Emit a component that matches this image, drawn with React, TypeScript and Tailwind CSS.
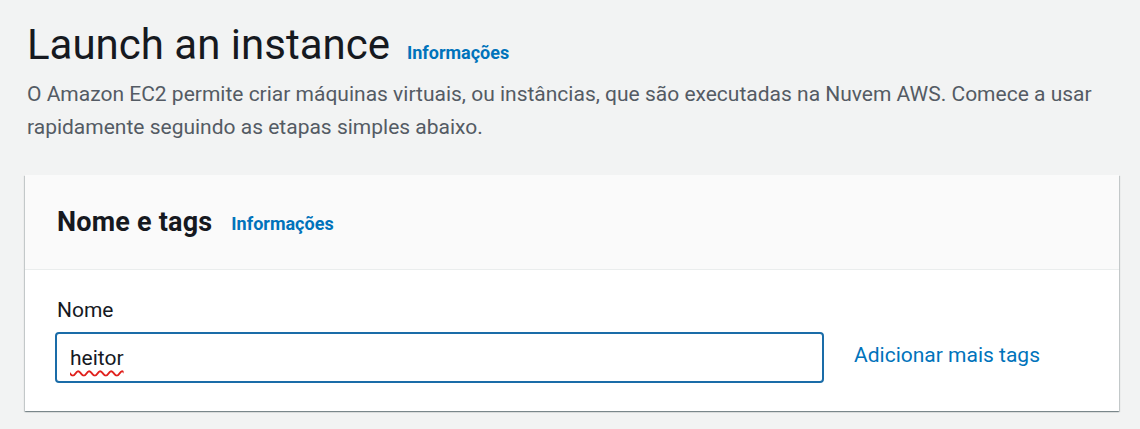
import React from "react";

export default function App() {
  return (
    <div
      className="min-h-screen bg-[#f2f3f3] pl-[25px] pr-[21px] pt-[20px] text-[#16191f]"
      style={{ fontFamily: "Roboto, 'Liberation Sans', sans-serif" }}
    >
      <div className="flex items-baseline gap-[17px] pl-[2px]">
        <h1 className="text-[42px] leading-[50px] font-normal text-[#16191f]">Launch an instance</h1>
        <a className="text-[18px] font-bold text-[#0073bb]">Informações</a>
      </div>
      <p className="mt-[8px] pl-[2px] text-[21px] leading-[33px] text-[#545b64]">
        O Amazon EC2 permite criar máquinas virtuais, ou instâncias, que são executadas na Nuvem AWS. Comece a usar
        rapidamente seguindo as etapas simples abaixo.
      </p>
      <div className="mt-[31px] bg-white shadow-[0_1px_1px_0_rgba(0,28,36,0.3),1px_1px_1px_0_rgba(0,28,36,0.15),-1px_1px_1px_0_rgba(0,28,36,0.15)]">
        <div className="flex h-[95px] items-center gap-[19px] border-b border-[#eaeded] bg-[#fafafa] px-[32px]">
          <h2 className="text-[27px] font-bold tracking-[0.2px] text-[#16191f]">Nome e tags</h2>
          <a className="mt-[2px] text-[18px] font-bold text-[#0073bb]">Informações</a>
        </div>
        <div className="px-[30px] pb-[28px] pt-[28px]">
          <div className="pl-[2px] text-[21px] leading-[24px] text-[#16191f]">Nome</div>
          <div className="mt-[10px] flex items-center gap-[30px]">
            <div className="flex h-[51px] w-[769px] items-center rounded-[4px] border-2 border-[#1a6ca8] bg-white px-[13px]">
              <span className="text-[21px] leading-[28px] text-[#16191f] underline decoration-wavy decoration-[#e0201c] decoration-[1.5px] underline-offset-[5px]">
                heitor
              </span>
            </div>
            <a className="-mt-[4px] text-[21px] text-[#0073bb]">Adicionar mais tags</a>
          </div>
        </div>
      </div>
    </div>
  );
}
